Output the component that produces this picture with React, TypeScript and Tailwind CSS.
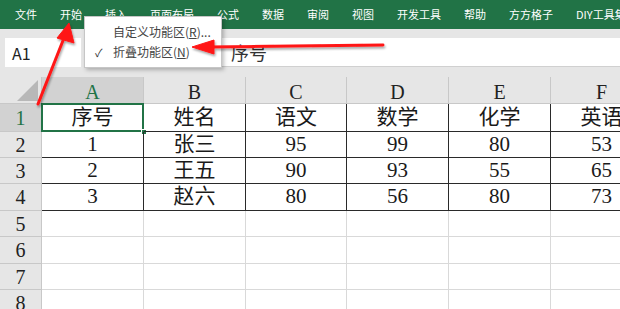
import React from 'react';

const tabs = ['文件', '开始', '插入', '页面布局', '公式', '数据', '审阅', '视图', '开发工具', '帮助', '方方格子', 'DIY工具集'];
const cols = ['A', 'B', 'C', 'D', 'E', 'F'];
const data = [
  ['序号', '姓名', '语文', '数学', '化学', '英语'],
  ['1', '张三', '95', '99', '80', '53'],
  ['2', '王五', '90', '93', '55', '65'],
  ['3', '赵六', '80', '56', '80', '73'],
];
const rowHeights = ['h-[28px]', 'h-[26px]', 'h-[26px]', 'h-[27px]', 'h-[26px]', 'h-[27px]', 'h-[26px]', 'h-[26px]'];

const sans = { fontFamily: '"Noto Sans CJK SC", "Noto Sans", sans-serif' };

export default function App() {
  return (
    <div className="relative w-[620px] h-[309px] overflow-hidden bg-white">
      {/* Ribbon tabs */}
      <div
        className="flex h-[29px] items-center gap-[23px] whitespace-nowrap bg-[#217346] pl-[15px] text-[11px] text-white"
        style={sans}
      >
        {tabs.map((t) => (
          <span key={t}>{t}</span>
        ))}
      </div>

      {/* Name box + formula bar */}
      <div className="flex h-[48px] items-start bg-[#e6e6e6] pt-[9px]">
        <div className="ml-[5px] flex h-[29px] w-[76px] items-center bg-white pl-[7px] text-[16px] text-[#222]" style={sans}>
          A1
        </div>
        <div className="flex h-[29px] w-[39px] items-center pl-[4px] text-[8px] text-[#666]">▾</div>
        <div className="flex h-[29px] flex-1 items-center border-b border-[#d0d0d0] bg-white pl-[111px] text-[18px] text-[#333]" style={sans}>
          序号
        </div>
      </div>

      {/* Sheet */}
      <div
        className="grid grid-cols-[42px_102px_102px_101px_102px_102px_102px]"
        style={{ fontFamily: '"Liberation Serif", "Noto Sans CJK SC", serif' }}
      >
        {/* corner */}
        <div className="relative h-[27px] border-r border-b border-[#c8c8c8] bg-[#e6e6e6]">
          <svg className="absolute right-[3px] bottom-[2px]" width="21" height="21" viewBox="0 0 21 21">
            <polygon points="21,0 21,21 0,21" fill="#b8b8b8" />
          </svg>
        </div>
        {cols.map((c, i) => (
          <div
            key={c}
            className={`flex h-[27px] items-end justify-center border-r border-b pb-[1px] text-[20px] leading-none ${
              i === 0
                ? 'border-b-[#217346] border-r-[#c8c8c8] bg-[#d2d2d2] text-[#217346]'
                : 'border-[#c8c8c8] bg-[#e6e6e6] text-[#222]'
            }`}
          >
            {c}
          </div>
        ))}

        {rowHeights.map((h, r) => (
          <React.Fragment key={r}>
            <div
              className={`flex ${h} items-center justify-center border-r border-b border-[#c8c8c8] text-[20px] ${
                r === 0 ? 'border-r-[#217346] bg-[#d2d2d2] text-[#217346]' : 'bg-[#e6e6e6] text-[#222]'
              }`}
            >
              {r + 1}
            </div>
            {cols.map((c, ci) => {
              const val = data[r]?.[ci];
              const inTable = r < 4;
              return (
                <div
                  key={c}
                  className={`relative flex ${h} items-center justify-center whitespace-nowrap border-r border-b text-[21px] text-[#1a1a1a] ${
                    inTable ? 'border-[#2a2a2a]' : 'border-[#d9d9d9]'
                  }`}
                >
                  {val}
                  {r === 0 && ci === 0 && (
                    <>
                      <div className="absolute -top-px -left-px -right-px -bottom-px border-2 border-[#217346]" />
                      <div className="absolute -right-[4px] -bottom-[4px] h-[6px] w-[6px] border border-white bg-[#217346]" />
                    </>
                  )}
                </div>
              );
            })}
          </React.Fragment>
        ))}
      </div>

      {/* Context menu */}
      <div
        className="absolute left-[84px] top-[16px] w-[138px] border border-[#c6c6c6] bg-white py-[5px] text-[12px] text-[#444] shadow-[2px_2px_4px_rgba(0,0,0,0.25)]"
        style={sans}
      >
        <div className="flex h-[20px] items-center pl-[28px]">
          自定义功能区(<span className="underline">R</span>)...
        </div>
        <div className="relative flex h-[20px] items-center pl-[28px]">
          <span className="absolute left-[10px] text-[11px] text-[#333]">✓</span>
          折叠功能区(<span className="underline">N</span>)
        </div>
      </div>

      {/* Red annotation arrows */}
      <svg className="pointer-events-none absolute inset-0" width="620" height="309" viewBox="0 0 620 309">
        <defs>
          <filter id="sh" x="-20%" y="-20%" width="140%" height="140%">
            <feDropShadow dx="1" dy="2" stdDeviation="1.2" floodColor="#000" floodOpacity="0.35" />
          </filter>
        </defs>
        <g filter="url(#sh)" fill="#ff1515" stroke="#ff1515">
          <line x1="38" y1="104" x2="64" y2="38" strokeWidth="3" strokeLinecap="round" />
          <polygon points="69,23 74,43 57,38" strokeWidth="1" strokeLinejoin="round" />
          <line x1="383" y1="45" x2="208" y2="47" strokeWidth="3" strokeLinecap="round" />
          <polygon points="192,47 214,40 214,54" strokeWidth="1" strokeLinejoin="round" />
        </g>
      </svg>
    </div>
  );
}
